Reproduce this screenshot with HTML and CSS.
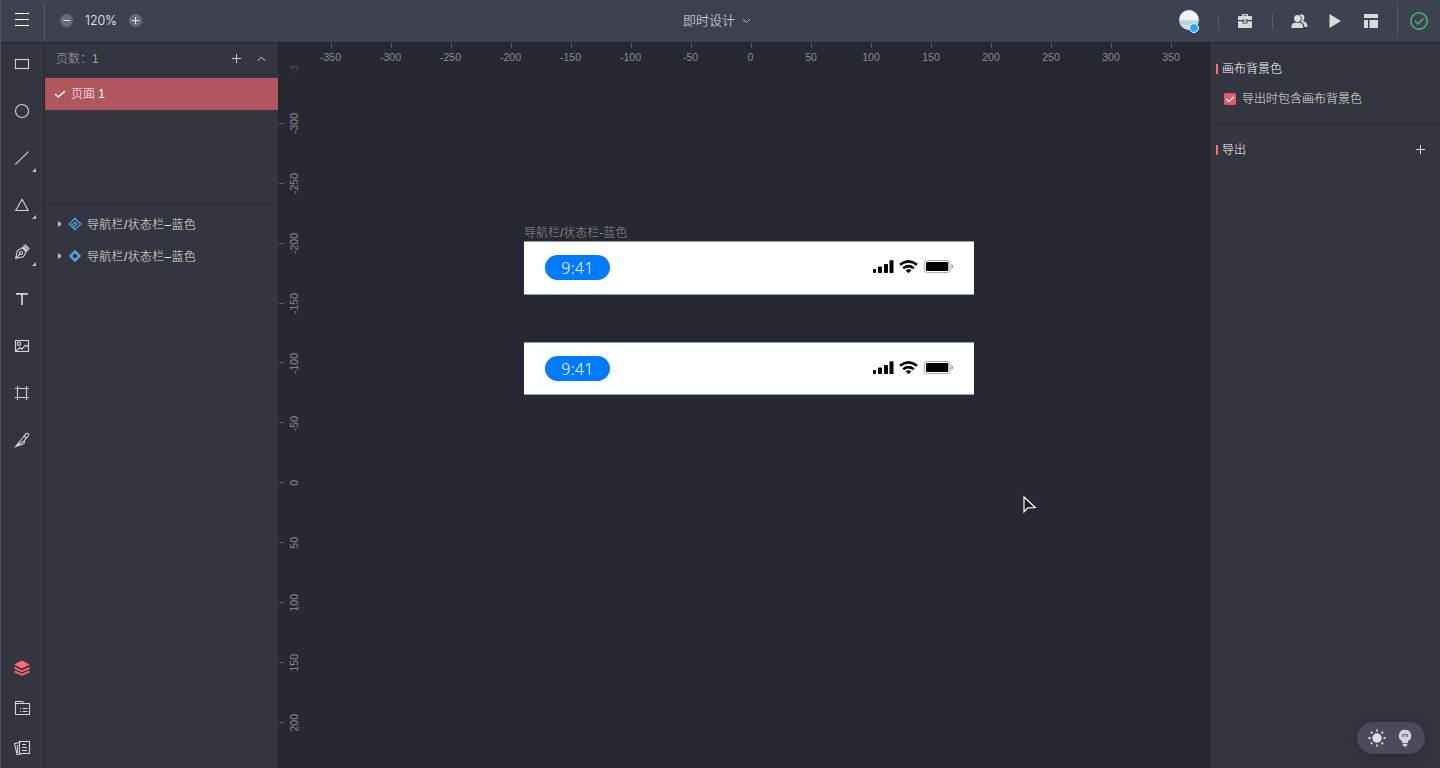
FILE: index.html
```html
<!DOCTYPE html>
<html lang="zh-CN">
<head>
<meta charset="utf-8">
<title>即时设计</title>
<link rel="stylesheet" href="styles.css">
</head>
<body>
<svg width="0" height="0" class="defs">
  <symbol id="status" viewBox="0 0 82 16">
    <rect x="0" y="10" width="3" height="4" rx=".8"/><rect x="5" y="7.500" width="4" height="6.500" rx=".8"/><rect x="11" y="5" width="4" height="9" rx=".8"/><rect x="16.500" y="1.300" width="4" height="12.700" rx=".8"/>
    <g fill="none" stroke="#000" stroke-width="2.500"><path d="M27 5.800q8.500-6.800 17 0"/><path d="M30.200 9.200q5.300-4.200 10.600 0"/></g>
    <path d="M32.600 11.300q2.900-2.200 5.800 0l-2.900 3z"/>
    <rect x="51.200" y="1.400" width="26" height="12.200" rx="3.200" fill="none" stroke="#a5a5a5"/>
    <rect x="53" y="3" width="22.300" height="9" rx="1.200"/><path d="M78.500 5q3.500 2.500 0 5z" fill="#999"/>
  </symbol>
</svg>
<div class="app">
  <header class="topbar">
    <div class="menu"><svg width="24" height="24"><path d="M5 5.500h14M5 11.500h14M5 17.500h14" stroke="#fff"/></svg></div>
    <div class="zoom">
      <svg width="13" height="13"><circle cx="6.500" cy="6.500" r="6.500" fill="#696b76"/><path d="M3 6.500h7" stroke="#e4e4e6"/></svg>
      <span class="percent">120%</span>
      <svg width="13" height="13"><circle cx="6.500" cy="6.500" r="6.500" fill="#696b76"/><path d="M3 6.500h7M6.500 3v7" stroke="#e4e4e6"/></svg>
    </div>
    <div class="title"><span>即时设计</span><svg width="9" height="6"><path d="M1 1l3.500 3.500L8 1" fill="none" stroke="#b5b6bc"/></svg></div>
    <div class="actions">
      <div class="avatar"><i></i></div>
      <i class="sep"></i>
      <svg class="brief" width="16" height="16" fill="#d9dadd"><path fill-rule="evenodd" d="M5 3V2q0-1 1-1h4q1 0 1 1v1h3q1 0 1 1v3h-4.500V6h-5v1H1V4q0-1 1-1zM6.500 2.300V3h3v-.7zM1 8.200h4.500v2.300h5V8.200H15V14q0 1-1 1H2q-1 0-1-1zM6.500 6.200h3v3.600h-3zM7.500 7.200v1.600h1V7.200z"/></svg>
      <i class="sep"></i>
      <svg class="people" width="17" height="16" fill="#d9dadd"><circle cx="6.500" cy="5.500" r="3.400"/><path d="M.5 15v-1.500q0-3.800 4-3.800h3.500q4 0 4 3.800V15zM8.500 1.400q4.400-1 4.900 2.800.1 2.500-1.700 4 4.300.5 4.600 4.300v1.500h-2.800q-.2-4-3.700-5 2.700-4.800-1.300-7.600z"/></svg>
      <svg class="play" width="12" height="16"><path d="M.5 1v14L12 8z" fill="#d9dadd"/></svg>
      <svg class="layout" width="16" height="16" fill="#d9dadd"><path d="M1 1h14v4H1zM1 7h4v8H1zM6.500 7H15v8H6.500z"/></svg>
    </div>
    <div class="saved"><svg width="18" height="18" fill="none" stroke="#46b86d" stroke-width="1.600"><circle cx="9" cy="9" r="8.200"/><path d="M4.800 9l3.200 3L13.300 6.500"/></svg></div>
  </header>
  <div class="body">
    <nav class="tools">
      <svg class="tool"><rect x="5.500" y="7.500" width="13" height="9"/></svg>
      <svg class="tool"><circle cx="12" cy="12" r="6.500"/></svg>
      <svg class="tool"><path d="M5.300 18.300L18.500 5.700"/><path class="corner" d="M26 22v4h-4z"/></svg>
      <svg class="tool"><path d="M12 6.300L18.200 17.500H5.800z"/><path class="corner" d="M26 22v4h-4z"/></svg>
      <svg class="tool"><path d="M5.700 18.300l1.500-7.500 5-3 4 4-2.800 5zM5.700 18.300l4.700-4.700M12.700 7l4.500 4.500M13.500 5.500l5 5M14.800 4.500l4.700 4.700"/><circle cx="11" cy="13" r="1.500"/><path class="corner" d="M26 22v4h-4z"/></svg>
      <svg class="tool"><path d="M6 6.800h12M12 6v12" class="thick"/></svg>
      <svg class="tool"><rect x="5.500" y="6.500" width="13" height="11"/><circle cx="9" cy="9.800" r="1.700"/><path d="M6 17l4-3.500 2 1.700 3.200-4 1.500 1.300 1.500-1"/></svg>
      <svg class="tool"><path d="M5 7.500h14M5 16.500h14M7.500 5v14M16.500 5v14"/></svg>
      <svg class="tool"><path d="M5.500 18.500L14 8.200l2.200 2-2 2.500q1 2-1.200 3.200zM5.500 18.500l8-5.200M14 8.200l2-2.500q1.500-1 2.400 0 1 1-.2 2.200l-2 2.300"/></svg>
      <span class="grow"></span>
      <div class="lower">
        <svg class="tool layers"><path class="fill" d="M12 4.500l8 4-8 4-8-4z"/><path d="M4.500 11.800l7.500 3.500 7.500-3.500M4.500 15.300l7.500 3.500 7.500-3.500"/></svg>
        <svg class="tool"><path d="M5.500 18.500v-13h7l1 2h6v11zM5.500 7.500h8M10 12.500h1M12.500 12.500h5M10 15.500h1M12.500 15.500h5"/></svg>
        <svg class="tool"><rect x="9.500" y="5.500" width="10" height="12"/><path d="M12 8.500h4M12 11.500h5M12 14.500h5M9 6.500l-4.500 1.200 2.600 11 4.600-1M7.500 9v8"/></svg>
      </div>
    </nav>
    <aside class="pages">
      <div class="pages-head"><span class="count">页数：1</span>
        <svg width="34" height="10" fill="none" stroke="#c9cacd"><path d="M0 4.500h9M4.500 0v9M25.500 7l3.800-4 3.800 4"/></svg></div>
      <div class="page"><svg width="12" height="10"><path d="M1 5l3.300 3L11 2" fill="none" stroke="#fff" stroke-width="1.400"/></svg><span>页面 1</span></div>
      <div class="layerlist">
        <div class="layer"><svg width="4" height="6"><path d="M0 0l4 3-4 3z" fill="#b7b8bd"/></svg>
          <svg width="14" height="14" fill="none" stroke="#4f9fd6" stroke-width="1.300"><path d="M5 10.800L1.200 7 7 1.200 12.800 7 7 12.800 5 10.800 8.800 7 7 5.200 3.800 8.400"/></svg><span>导航栏/状态栏–蓝色</span></div>
        <div class="layer"><svg width="4" height="6"><path d="M0 0l4 3-4 3z" fill="#b7b8bd"/></svg>
          <svg width="14" height="14"><path d="M7 1.300L12.700 7 7 12.700 1.300 7z" fill="#50a5df" stroke="#50a5df" stroke-linejoin="round"/><circle cx="7" cy="7" r="2.200" fill="#333540"/></svg><span>导航栏/状态栏–蓝色</span></div>
      </div>
    </aside>
    <main class="canvas">
      <div class="ruler-x"><span>-350</span><span>-300</span><span>-250</span><span>-200</span><span>-150</span><span>-100</span><span>-50</span><span>0</span><span>50</span><span>100</span><span>150</span><span>200</span><span>250</span><span>300</span><span>350</span></div>
      <div class="ruler-y"><span class="faded"><b>-3</b></span><span><b>-300</b></span><span><b>-250</b></span><span><b>-200</b></span><span><b>-150</b></span><span><b>-100</b></span><span><b>-50</b></span><span><b>0</b></span><span><b>50</b></span><span><b>100</b></span><span><b>150</b></span><span><b>200</b></span></div>
      <div class="frame-name">导航栏/状态栏-蓝色</div>
      <div class="frame first"><span class="time">9:41</span><svg width="82" height="16"><use href="#status"/></svg></div>
      <div class="frame second"><span class="time">9:41</span><svg width="82" height="16"><use href="#status"/></svg></div>
      <svg class="cursor" width="16" height="20"><path d="M2 2v15l3.700-4.200 7.500-.3z" fill="#17181c" stroke="#fff" stroke-width="1.200"/></svg>
    </main>
    <aside class="props">
      <section class="background"><h2>画布背景色</h2>
        <div class="check"><svg width="12" height="12"><rect width="12" height="12" rx="2" fill="#db5f68"/><path d="M2.200 6l2.800 2.500 4.800-4.700" fill="none" stroke="#fff" stroke-width="1.200"/></svg><span>导出时包含画布背景色</span></div></section>
      <section class="export"><h2>导出</h2><svg width="9" height="9"><path d="M0 4.500h9M4.500 0v9" stroke="#e0e0e2"/></svg></section>
      <div class="theme">
        <svg width="18" height="18"><circle cx="9" cy="9" r="4.700" fill="#dedee0"/><g stroke="#dedee0" stroke-width="1.800"><path d="M9 .5v2M9 15.500v2M.5 9h2M15.500 9h2M3 3l1.400 1.400M13.600 13.600L15 15M3 15l1.400-1.400M13.600 4.400L15 3"/></g></svg>
        <svg width="14" height="18"><path d="M7 .8a6 6 0 0 0-3.500 11l1 2.200h5l1-2.200A6 6 0 0 0 7 .8zM4.700 14.700h4.600v1.800L8 17.500H6l-1.300-1z" fill="#d3d4d7"/><path d="M4.500 8V5.500h5V8M7 5.500V8" fill="none" stroke="#6a6b78"/></svg>
      </div>
    </aside>
  </div>
</div>
</body>
</html>
```
FILE: styles.css
```css
* { box-sizing: border-box; }
body { margin: 0; background: #262832; font: 300 12px/16px "Liberation Sans", "Noto Sans CJK SC", sans-serif; color: #e2e3e5; }
svg { display: block; flex: none; }
.defs { position: absolute; }
.app { width: 1440px; height: 768px; display: flex; flex-direction: column; overflow: hidden; }
.topbar { height: 43px; flex: none; display: grid; grid-template-columns: 44px 561px 1fr 219px 43px; background: #3e4250; border-bottom: 1px solid #24262f; border-left: 1px solid #51535f; }
.menu { display: flex; height: 36px; margin-top: 4px; padding: 4px 0 0 9px; border-right: 1px solid #595c68; }
.zoom { display: flex; align-items: center; padding: 0 0 1px 15px; }
.percent { width: 56px; padding-top: 1px; text-align: center; font: 300 12.500px/16px Inter, sans-serif; color: #f6f6f7; }
.title { display: flex; align-items: center; padding: 0 0 1px 77px; gap: 7px; font-size: 13px; }
.title span { padding-top: 1px; }
.actions { display: flex; align-items: center; padding-bottom: 1px; }
.avatar { position: relative; width: 20px; height: 20px; margin: -2px 19px 0 1px; border-radius: 50%; background: linear-gradient(#eff5f7 0 45%, #b8cbd3 60%, #e4ebed); }
.avatar i { position: absolute; right: 0; bottom: -3px; width: 10px; height: 10px; border: 1px solid #fff; border-radius: 50%; background: #2aa7fb; }
.sep { width: 1px; height: 16px; background: #5b5e69; }
.brief { margin: 0 19px 0 18px; }
.people { margin-left: 18px; margin-right: 21px; }
.play { margin-right: 22px; }
.saved { height: 32px; margin-top: 4px; padding: 8px 0 0 12px; border-left: 1px solid #595c68; }
.body { flex: 1; display: grid; grid-template-columns: 45px 234px 930px 231px; min-height: 0; }
.tools { display: flex; flex-direction: column; gap: 23px; padding: 9px 0 8px 9px; background: #333540; border-left: 1px solid #51535f; border-right: 1px solid #24262f; }
.tool { width: 24px; height: 24px; overflow: visible; fill: none; stroke: #d3d4d7; stroke-width: 1.1; }
.tool .corner { fill: #c2c3c7; stroke: none; }
.tool .thick { stroke-width: 1.7; }
.grow { flex: 1; margin-bottom: -23px; }
.lower { display: flex; flex-direction: column; gap: 16px; }
.layers { stroke: #ff6b70; stroke-width: 1.9; }
.layers .fill { fill: #ff6b70; stroke: none; }
.pages { background: #333540; border-right: 1px solid #24262f; }
.pages-head { height: 32px; display: flex; justify-content: space-between; align-items: center; padding: 0 12px 0 11px; border-bottom: 1px solid #292b34; color: #a3a4ab; }
.page { height: 32px; margin-top: 3px; display: flex; align-items: center; gap: 5px; padding-left: 9px; background: #b0565f; color: #fff; }
.layer span { padding-top: 1px; letter-spacing: .3px; }
.layerlist { margin-top: 94px; padding-top: 3px; border-top: 1px solid #292b34; }
.layer { height: 32px; display: flex; align-items: center; padding-left: 13px; }
.layer svg + svg { margin: 0 5px 0 6px; }
.canvas { position: relative; overflow: hidden; background: #262832; font-size: 10.5px; color: #8c8d94; }
.ruler-x { display: flex; padding-left: 22px; }
.ruler-x span { width: 60px; padding: 6px 1px 0 0; text-align: center; background: linear-gradient(#5c5e67, #5c5e67) 30px 0 / 1px 5px no-repeat; }
.ruler-x span:nth-child(n+9) { padding-right: 0; }
.ruler-y { position: absolute; left: 0; top: -10px; width: 24px; }
.ruler-y span { height: 59.9px; display: flex; align-items: center; justify-content: center; padding: 2px 0 0 5px; background: linear-gradient(#5c5e67, #5c5e67) 0 30px / 5px 1px no-repeat; }
.ruler-y b { font-weight: 400; writing-mode: vertical-rl; transform: rotate(180deg); }
.ruler-y .faded { background: none; color: #4c4e57; padding-top: 14px; }
.frame-name { position: absolute; left: 245px; top: 182px; font-size: 12px; color: #94959b; white-space: nowrap; }
.frame { position: absolute; left: 245px; width: 450px; height: 53px; display: flex; justify-content: space-between; align-items: center; padding: 0 19px 0 21px; background: #fff; border: solid #9b9ca1; border-width: 1px 0; }
.frame svg { margin-top: -1px; }
.first { top: 198px; height: 54px; padding-bottom: 1px; }
.second { top: 299px; }
.time { width: 65px; height: 25px; border-radius: 13px; background: #007aff; color: #fff; text-align: center; font: 300 16px/27px "Noto Sans", sans-serif; letter-spacing: .3px; }
.cursor { position: absolute; left: 743px; top: 452px; }
.props { position: relative; background: #333540; border-left: 1px solid #24262f; }
.background { height: 81px; padding: 18px 0 0 6px; border-bottom: 1px solid #292b34; }
h2 { margin: 0; display: flex; align-items: center; gap: 4px; font-size: 12px; font-weight: 300; color: #fff; }
h2::before { content: ""; width: 2px; height: 10px; background: #ff6b70; }
.check { display: flex; align-items: center; gap: 6px; margin-top: 14px; padding-left: 8px; }
.export { display: flex; justify-content: space-between; align-items: center; padding: 18px 15px 0 6px; }
.export svg { margin-top: -1px; }
.theme { position: absolute; left: 147px; bottom: 14px; width: 68px; height: 32px; display: flex; align-items: center; justify-content: center; gap: 12px; padding-right: 2px; border-radius: 16px; background: #4a4c5c; box-shadow: 0 2px 7px #292b34; }
```
